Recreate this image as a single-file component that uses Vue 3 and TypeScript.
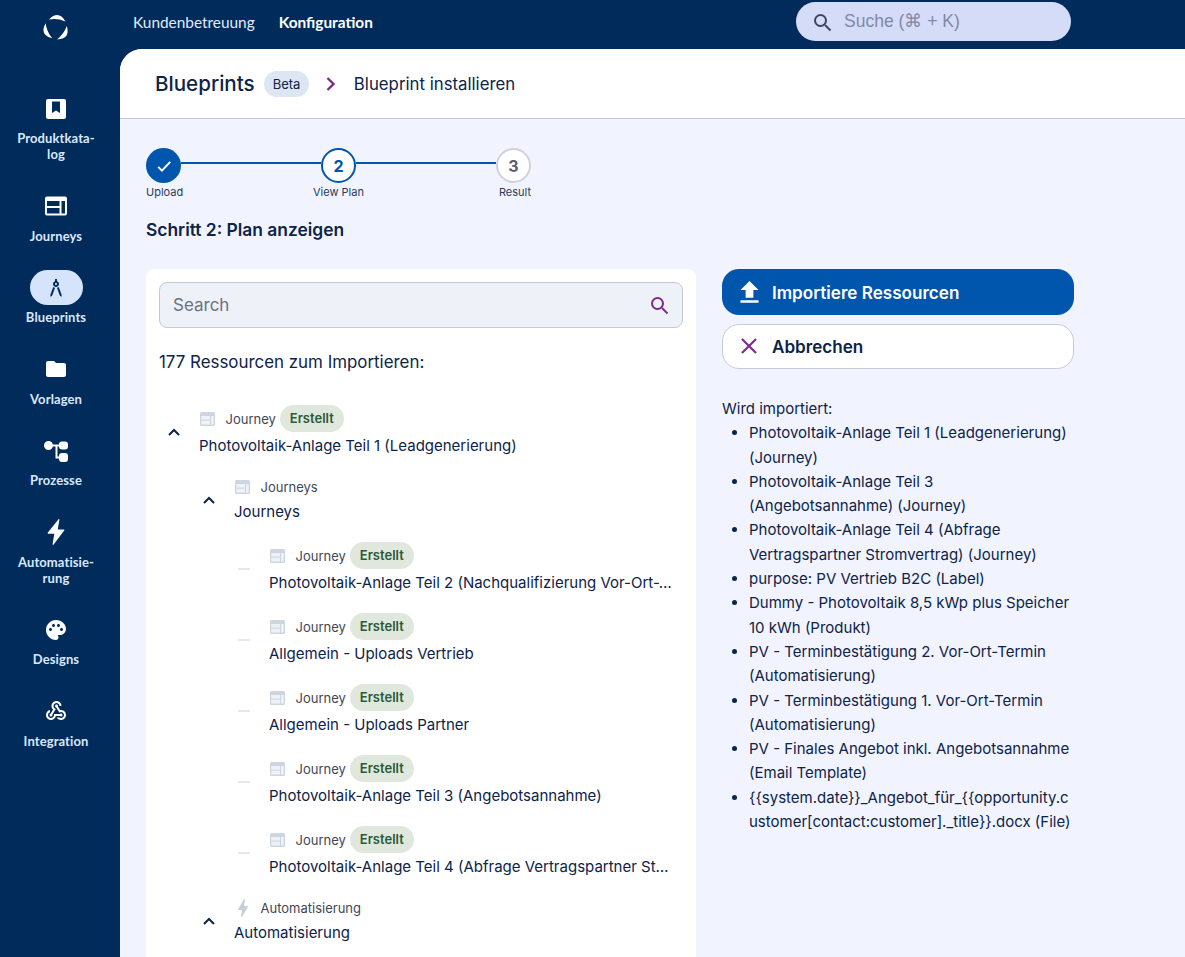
<template>
  <div class="app">
    <aside class="sidebar">
      <div class="logo">
        <svg width="30" height="30" viewBox="-15 -15 30 30" fill="#fff">
          <path v-for="r in [0, 120, 240]" :key="r" :transform="`rotate(${r})`" d="M-7.070 -8.430Q2.430 -18.200 9.420 -6.600Q1.270 -9.900 -7.070 -8.430Z" />
        </svg>
      </div>
      <nav class="side-nav">
        <a v-for="item in navItems" :key="item.label" class="side-item" :class="{ active: item.active }">
          <span class="side-icon">
            <svg :width="item.size ?? 24" :height="item.size ?? 24" viewBox="0 0 24 24" fill="currentColor" fill-rule="evenodd"><path :d="item.d" /></svg>
          </span>
          <span class="side-label">{{ item.label }}</span>
        </a>
      </nav>
    </aside>

    <div class="right">
      <header class="topbar">
        <a class="top-link">Kundenbetreuung</a>
        <a class="top-link current">Konfiguration</a>
        <div class="global-search">
          <svg width="24" height="24" viewBox="0 0 24 24" fill="none" stroke="#3d4660" stroke-width="2"><circle cx="10.500" cy="10.500" r="5.500" /><path d="M15 15l5.500 5.500" /></svg>
          <span>Suche (⌘ + K)</span>
        </div>
      </header>

      <main class="panel">
        <div class="page-head">
          <h1>Blueprints</h1>
          <span class="beta">Beta</span>
          <svg class="crumb" width="24" height="24" viewBox="0 0 24 24" fill="none" stroke="#7b2d8b" stroke-width="2.400"><path d="M8.500 6l6 6-6 6" /></svg>
          <span class="crumb-text">Blueprint installieren</span>
        </div>

        <div class="content">
          <div class="stepper">
            <div class="step first">
              <div class="dot done">
                <svg width="20" height="20" viewBox="0 0 24 24" fill="none" stroke="#fff" stroke-width="2.400"><path d="M5 13l4.500 4.500L19.500 7" /></svg>
              </div>
              <span>Upload</span>
            </div>
            <div class="line"></div>
            <div class="step">
              <div class="dot now">2</div>
              <span>View Plan</span>
            </div>
            <div class="line"></div>
            <div class="step last">
              <div class="dot todo">3</div>
              <span>Result</span>
            </div>
          </div>

          <h2>Schritt 2: Plan anzeigen</h2>

          <div class="columns">
            <section class="card">
              <div class="search">
                <span>Search</span>
                <svg width="24" height="24" viewBox="0 0 24 24" fill="none" stroke="#7b2d8b" stroke-width="2"><circle cx="10.500" cy="10.500" r="5.500" /><path d="M15 15l5.500 5.500" /></svg>
              </div>
              <p class="count">177 Ressourcen zum Importieren:</p>

              <div class="tree">
                <div v-for="(row, i) in rows" :key="i" class="tree-row" :style="{ paddingLeft: row.level * 35 + 'px' }">
                  <div class="toggle">
                    <svg v-if="row.open" width="24" height="24" viewBox="0 0 24 24" fill="none" stroke="#0b2447" stroke-width="2"><path d="M7 15l5-5 5 5" /></svg>
                    <i v-else class="dash"></i>
                  </div>
                  <div class="node">
                    <div class="meta" :class="{ tall: row.badge }">
                      <svg v-if="row.bolt" class="type-icon bolt" width="24" height="24" viewBox="0 0 24 24" fill="#c5ced9"><path d="M11 21h-1l1-7H7.500c-.58 0-.57-.32-.38-.66.19-.34.05-.08.07-.12C8.480 10.940 10.420 7.540 13 3h1l-1 7h3.500c.49 0 .56.33.47.51l-.07.15C12.960 17.550 11 21 11 21z" /></svg>
                      <svg v-else class="type-icon" width="15" height="14" viewBox="0 0 15 14">
                        <rect width="15" height="14" rx="1.500" fill="#cdd5e0" />
                        <rect x="1.200" y="4" width="8.800" height="3.600" fill="#eef1f5" />
                        <rect x="1.200" y="8.600" width="8.800" height="4" fill="#eef1f5" />
                        <rect x="11" y="4" width="2.800" height="8.600" fill="#eef1f5" />
                      </svg>
                      <span class="type">{{ row.type }}</span>
                      <span v-if="row.badge" class="badge">Erstellt</span>
                    </div>
                    <div class="title">{{ row.title }}</div>
                  </div>
                </div>
              </div>
            </section>

            <section class="side">
              <button class="btn primary">
                <svg width="31" height="31" viewBox="0 0 24 24" fill="#fff"><path d="M9 16h6v-6h4l-7-7-7 7h4v6zm-4 2h14v2H5z" /></svg>
                Importiere Ressourcen
              </button>
              <button class="btn ghost">
                <svg width="26" height="26" viewBox="0 0 24 24" fill="none" stroke="#7b2d8b" stroke-width="2"><path d="M5.500 5.500l13 13M18.500 5.500l-13 13" /></svg>
                Abbrechen
              </button>
              <div class="import-list">
                <p>Wird importiert:</p>
                <ul>
                  <li v-for="entry in imports" :key="entry">{{ entry }}</li>
                </ul>
              </div>
            </section>
          </div>
        </div>
      </main>
    </div>
  </div>
</template>

<script setup lang="ts">
interface NavItem {
  label: string
  d: string
  active?: boolean
  size?: number
}

interface TreeRow {
  level: number
  open: boolean
  type: string
  title: string
  badge?: boolean
  bolt?: boolean
}

const navItems: NavItem[] = [
  { label: 'Produktkata-\u200blog', d: 'M4 2h16a2 2 0 0 1 2 2v16a2 2 0 0 1-2 2H4a2 2 0 0 1-2-2V4a2 2 0 0 1 2-2zM8 4.500V16l4-2.500 4 2.500V4.500z' },
  { label: 'Journeys', d: 'M3 2.500h18a2 2 0 0 1 2 2v15a2 2 0 0 1-2 2H3a2 2 0 0 1-2-2v-15a2 2 0 0 1 2-2zM3 7v5h12.500V7zM3 14v5.500h12.500V14zM17.500 7v12.500H21V7z' },
  { label: 'Blueprints', active: true, d: 'M6.360 18.780L6.610 21l1.620-1.540 2.770-7.600c-.68-.17-1.280-.51-1.770-.98L6.360 18.780zM14.770 10.880c-.49.47-1.100.81-1.770.98l2.770 7.600L17.390 21l.26-2.220-2.880-7.900zM15 8c0-1.300-.84-2.400-2-2.820V3h-2v2.180C9.840 5.600 9 6.700 9 8c0 1.660 1.340 3 3 3s3-1.340 3-3zM12 9c-.55 0-1-.45-1-1s.45-1 1-1 1 .45 1 1-.45 1-1 1z' },
  { label: 'Vorlagen', d: 'M10 4H4c-1.100 0-1.990.9-1.990 2L2 18c0 1.100.9 2 2 2h16c1.100 0 2-.9 2-2V8c0-1.100-.9-2-2-2h-8l-2-2z' },
  { label: 'Prozesse', d: 'M0 6.500a4.500 4.500 0 1 0 9 0a4.500 4.500 0 1 0-9 0zM18 2.500h3a3 3 0 0 1 3 3v2a3 3 0 0 1-3 3h-3a3 3 0 0 1-3-3v-2a3 3 0 0 1 3-3zM18 14h3a3 3 0 0 1 3 3v3a3 3 0 0 1-3 3h-3a3 3 0 0 1-3-3v-3a3 3 0 0 1 3-3zM9 5.500h6v2h-1.500V17.500H15v2h-3.500V7.500H9z' },
  { label: 'Automatisie-\u200brung', size: 28, d: 'M14 1.200c.5-.6 1-.3.9.4L13.500 9.800h5c.7 0 .9.5.5 1L10 22.800c-.5.6-1 .3-.9-.4l1.400-8.900h-5c-.7 0-.9-.5-.5-1z' },
  { label: 'Designs', d: 'M12 2C6.490 2 2 6.490 2 12s4.490 10 10 10c1.380 0 2.500-1.120 2.500-2.500 0-.61-.23-1.200-.64-1.670-.08-.1-.13-.21-.13-.33 0-.28.22-.5.5-.5H16c3.310 0 6-2.690 6-6 0-4.960-4.490-9-10-9zm5.500 11c-.83 0-1.500-.67-1.500-1.500s.67-1.500 1.500-1.500 1.500.67 1.500 1.500-.67 1.500-1.500 1.500zm-3-4c-.83 0-1.500-.67-1.500-1.500S13.670 6 14.500 6s1.500.67 1.500 1.500S15.330 9 14.500 9zM5 11.500c0-.83.67-1.500 1.500-1.500s1.500.67 1.500 1.500S7.330 13 6.500 13 5 12.330 5 11.500zm6-4c0 .83-.67 1.500-1.500 1.500S8 8.330 8 7.500 8.670 6 9.500 6s1.500.67 1.500 1.500z' },
  { label: 'Integration', d: 'M10 15h5.880c.27-.31.67-.5 1.120-.5.83 0 1.500.67 1.500 1.500s-.67 1.500-1.500 1.500c-.44 0-.84-.19-1.120-.5H11.900c-.46 2.280-2.480 4-4.900 4-2.760 0-5-2.240-5-5 0-2.420 1.720-4.440 4-4.900v2.070c-1.160.41-2 1.530-2 2.830 0 1.650 1.350 3 3 3s3-1.350 3-3v-1zm2.500-11c1.650 0 3 1.350 3 3h2c0-2.760-2.240-5-5-5s-5 2.240-5 5c0 1.430.6 2.710 1.550 3.620l-2.350 3.900c-.68.14-1.200.75-1.200 1.480 0 .83.67 1.500 1.500 1.500s1.500-.67 1.500-1.500c0-.16-.02-.31-.07-.45l3.380-5.630C10.490 9.610 9.500 8.420 9.500 7c0-1.650 1.350-3 3-3zm4.500 9c-.64 0-1.230.2-1.720.54l-3.050-5.070C11.530 8.350 11 7.740 11 7c0-.83.67-1.500 1.500-1.500S14 6.170 14 7c0 .15-.02.29-.06.43l2.190 3.650c.28-.05.57-.08.87-.08 2.760 0 5 2.240 5 5s-2.240 5-5 5c-1.850 0-3.470-1.010-4.330-2.500h2.670c.48.32 1.050.5 1.660.5 1.650 0 3-1.350 3-3s-1.350-3-3-3z' }
]

const rows: TreeRow[] = [
  { level: 0, open: true, type: 'Journey', badge: true, title: 'Photovoltaik-Anlage Teil 1 (Leadgenerierung)' },
  { level: 1, open: true, type: 'Journeys', title: 'Journeys' },
  { level: 2, open: false, type: 'Journey', badge: true, title: 'Photovoltaik-Anlage Teil 2 (Nachqualifizierung Vor-Ort-Termin)' },
  { level: 2, open: false, type: 'Journey', badge: true, title: 'Allgemein - Uploads Vertrieb' },
  { level: 2, open: false, type: 'Journey', badge: true, title: 'Allgemein - Uploads Partner' },
  { level: 2, open: false, type: 'Journey', badge: true, title: 'Photovoltaik-Anlage Teil 3 (Angebotsannahme)' },
  { level: 2, open: false, type: 'Journey', badge: true, title: 'Photovoltaik-Anlage Teil 4 (Abfrage Vertragspartner Stromvertrag)' },
  { level: 1, open: true, type: 'Automatisierung', bolt: true, title: 'Automatisierung' }
]

const imports: string[] = [
  'Photovoltaik-Anlage Teil 1 (Leadgenerierung) (Journey)',
  'Photovoltaik-Anlage Teil 3 (Angebotsannahme) (Journey)',
  'Photovoltaik-Anlage Teil 4 (Abfrage Vertragspartner Stromvertrag) (Journey)',
  'purpose: PV Vertrieb B2C (Label)',
  'Dummy - Photovoltaik 8,5 kWp plus Speicher 10 kWh (Produkt)',
  'PV - Terminbestätigung 2. Vor-Ort-Termin (Automatisierung)',
  'PV - Terminbestätigung 1. Vor-Ort-Termin (Automatisierung)',
  'PV - Finales Angebot inkl. Angebotsannahme (Email Template)',
  '{{system.date}}_Angebot_für_{{opportunity.customer[contact:customer]._title}}.docx (File)'
]
</script>

<style>
html,
body {
  margin: 0;
  background: #002b5b;
}
</style>

<style scoped>
.app {
  display: flex;
  height: 957px;
  overflow: hidden;
  background: #002b5b;
  font-family: Inter, "Liberation Sans", sans-serif;
  color: #0d2348;
}

.sidebar {
  width: 120px;
  flex-shrink: 0;
  box-sizing: border-box;
  padding-right: 8px;
}

.logo {
  height: 91px;
  padding-top: 13px;
  box-sizing: border-box;
  display: flex;
  justify-content: center;
  align-items: flex-start;
}

.side-nav {
  display: flex;
  flex-direction: column;
  gap: 26.500px;
}

.side-item {
  display: flex;
  flex-direction: column;
  align-items: center;
  gap: 4px;
  color: #fff;
}

.side-icon {
  width: 53px;
  height: 35px;
  border-radius: 18px;
  display: flex;
  align-items: center;
  justify-content: center;
}

.side-item.active .side-icon {
  background: #d6e4fb;
  color: #002b5b;
}

.side-label {
  width: 90px;
  text-align: center;
  font-family: Lato, sans-serif;
  font-size: 13px;
  font-weight: 700;
  line-height: 16px;
  color: #dbe8fb;
  letter-spacing: 0.1px;
}

.right {
  flex: 1;
  min-width: 0;
  display: flex;
  flex-direction: column;
}

.topbar {
  height: 49px;
  flex-shrink: 0;
  display: flex;
  align-items: flex-start;
  padding-left: 13px;
  gap: 24px;
  position: relative;
}

.top-link {
  font-family: Lato, sans-serif;
  font-size: 15.400px;
  line-height: 45px;
  color: #e2eafa;
}

.top-link.current {
  font-weight: 700;
  color: #fff;
}

.global-search {
  position: absolute;
  left: 676px;
  top: 2px;
  width: 275px;
  height: 39px;
  border-radius: 20px;
  background: #d5dcf7;
  display: flex;
  align-items: center;
  padding-left: 14px;
  box-sizing: border-box;
  gap: 10px;
  font-family: "Liberation Sans", sans-serif;
  font-size: 17.500px;
  color: #8289a8;
}

.panel {
  flex: 1;
  min-height: 0;
  background: #f1f4fe;
  border-top-left-radius: 22px;
  overflow: hidden;
}

.page-head {
  height: 70px;
  box-sizing: border-box;
  background: #fff;
  border-bottom: 1px solid #c6cbd9;
  display: flex;
  align-items: center;
  padding-left: 35px;
}

.page-head h1 {
  margin: 0;
  font-size: 20.600px;
  font-weight: 500;
}

.beta {
  margin-left: 9px;
  padding: 0 9px;
  height: 26px;
  line-height: 26px;
  border-radius: 13px;
  background: #dde7f4;
  font-size: 13px;
}

.crumb {
  margin-left: 10px;
}

.crumb-text {
  margin-left: 10.500px;
  font-size: 16.800px;
}

.content {
  padding: 29px 0 0 26px;
}

.stepper {
  width: 385px;
  display: flex;
  align-items: flex-start;
}

.step {
  width: 35px;
  display: flex;
  flex-direction: column;
  align-items: center;
  font-size: 11px;
  white-space: nowrap;
  flex-shrink: 0;
}

.step > span {
  margin-top: 2px;
  line-height: 14px;
  color: #2a3a58;
}

.step.first {
  align-items: flex-start;
}

.step.last {
  align-items: flex-end;
}

.dot {
  width: 35px;
  height: 35px;
  box-sizing: border-box;
  border-radius: 50%;
  display: flex;
  align-items: center;
  justify-content: center;
  font-size: 16px;
  font-weight: 700;
}

.done {
  background: #0056ad;
}

.now {
  background: #fff;
  border: 2px solid #0056ad;
  color: #0056ad;
}

.todo {
  background: #fff;
  border: 2px solid #cfd2da;
  color: #5a5f6b;
}

.line {
  flex: 1;
  height: 2px;
  margin-top: 14px;
  background: #0056ad;
}

h2 {
  margin: 19px 0 0;
  font-size: 17.400px;
  line-height: 24px;
  font-weight: 600;
}

.columns {
  margin-top: 27px;
  display: flex;
  align-items: flex-start;
  gap: 26px;
}

.card {
  width: 550px;
  box-sizing: border-box;
  padding: 13px 13px 40px;
  background: #fff;
  border-radius: 8px;
}

.search {
  height: 46px;
  box-sizing: border-box;
  padding: 0 11px 0 13px;
  display: flex;
  align-items: center;
  justify-content: space-between;
  background: #eef1f8;
  border: 1px solid #c3cad6;
  border-radius: 8px;
  font-size: 17px;
  color: #6b7280;
}

.count {
  margin: 22px 0 0;
  font-size: 16.900px;
  line-height: 24px;
}

.tree {
  margin-top: 31px;
}

.tree-row {
  display: flex;
  align-items: center;
  margin-bottom: 18px;
  padding-right: 10px;
}

.toggle {
  width: 30px;
  height: 24px;
  margin-right: 10px;
  flex-shrink: 0;
  display: flex;
  align-items: center;
  justify-content: center;
}

.dash {
  width: 12px;
  height: 2px;
  background: #e6e8ee;
}

.node {
  flex: 1;
  min-width: 0;
}

.meta {
  height: 22px;
  margin-bottom: 2px;
  display: flex;
  align-items: center;
  font-size: 13px;
  color: #3f4756;
}

.meta.tall {
  height: 27px;
}

.type-icon {
  margin-left: 1px;
  margin-right: 10.500px;
  flex-shrink: 0;
}

.bolt {
  margin-left: -3.500px;
  margin-right: 6px;
}

.badge {
  margin-left: 4px;
  height: 27px;
  line-height: 27px;
  padding: 0 10px;
  border-radius: 14px;
  background: #e0e8de;
  color: #2b5a34;
  font-size: 13px;
  font-weight: 600;
}

.title {
  font-size: 15px;
  line-height: 24px;
  white-space: nowrap;
  overflow: hidden;
  text-overflow: ellipsis;
}

.side {
  width: 352px;
}

.btn {
  width: 100%;
  display: flex;
  align-items: center;
  box-sizing: border-box;
  font-family: inherit;
  font-size: 17.100px;
  font-weight: 600;
  border-radius: 17px;
  padding: 0;
}

.btn svg {
  flex-shrink: 0;
}

.primary {
  height: 46px;
  border: none;
  background: #0056ad;
  color: #fff;
  padding-left: 12px;
  gap: 7px;
}

.ghost {
  height: 45px;
  margin-top: 9px;
  border: 1px solid #c6cbd9;
  background: #fff;
  color: #0d2348;
  padding-left: 13px;
  padding-bottom: 1px;
  gap: 10px;
}

.import-list {
  margin-top: 28px;
  font-size: 15px;
  line-height: 24.300px;
}

.import-list p {
  margin: 0;
}

.import-list ul {
  margin: 0;
  padding: 0 0 0 27px;
}

.import-list li {
  overflow-wrap: anywhere;
}
</style>
